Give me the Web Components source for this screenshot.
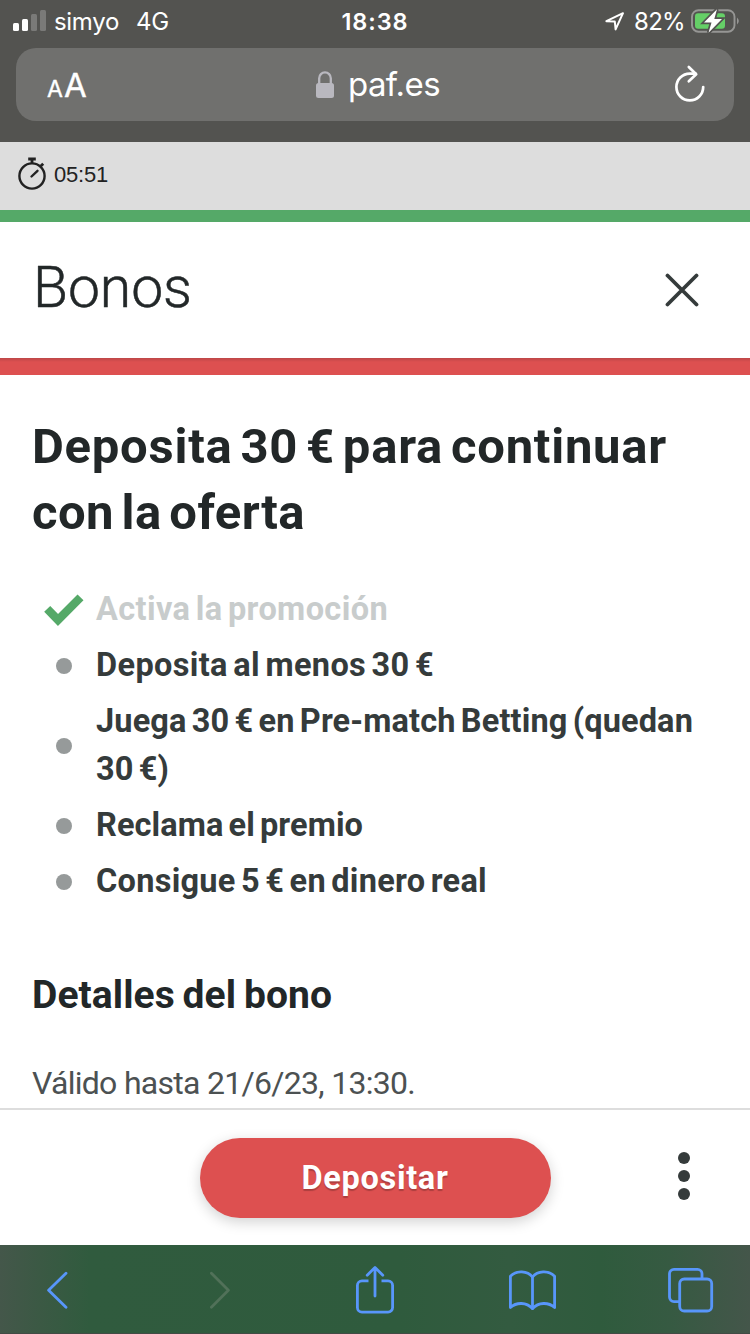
<!DOCTYPE html>
<html lang="es">
<head>
<meta charset="utf-8">
<title>Bonos</title>
<style>
body{
    margin: 0;
    width: 750px;
    height: 1334px;
    overflow: hidden;
    background: #fff;
    font-family: Roboto, "Liberation Sans", sans-serif;
}
</style>
</head>
<body>
<bonus-page>
    <browser-top slot="top" carrier="simyo" network="4G" time="18:38" battery="82%" site="paf.es"></browser-top>
    <session-timer slot="timer">05:51</session-timer>
    <page-header slot="header">Bonos</page-header>
    <bonus-details>
        <text-line slot="title" measure="635">Deposita 30 € para continuar</text-line>
        <text-line slot="title" measure="273">con la oferta</text-line>
        <bonus-step done><text-line measure="292">Activa la promoción</text-line></bonus-step>
        <bonus-step><text-line measure="338">Deposita al menos 30 €</text-line></bonus-step>
        <bonus-step><text-line measure="597">Juega 30 € en Pre-match Betting (quedan</text-line><text-line measure="73">30 €)</text-line></bonus-step>
        <bonus-step><text-line measure="267">Reclama el premio</text-line></bonus-step>
        <bonus-step><text-line measure="391">Consigue 5 € en dinero real</text-line></bonus-step>
        <text-line slot="subtitle" measure="300">Detalles del bono</text-line>
        <text-line slot="note" measure="383">Válido hasta 21/6/23, 13:30.</text-line>
    </bonus-details>
    <action-bar slot="actions"><text-line measure="147">Depositar</text-line></action-bar>
    <browser-tools slot="tools"></browser-tools>
</bonus-page>

<script>
class BonusPage extends HTMLElement{
    constructor(){
        super();
        this.attachShadow({mode: 'open'}).innerHTML = `
        <style>
        :host{
            display: flex;
            flex-direction: column;
            width: 750px;
            height: 1334px;
        }
        main{
            flex: 1;
            min-height: 0;
            overflow: hidden;
        }
        </style>
        <slot name="top"></slot>
        <slot name="timer"></slot>
        <slot name="header"></slot>
        <main><slot></slot></main>
        <slot name="actions"></slot>
        <slot name="tools"></slot>
        `;
    }
}

class BrowserTop extends HTMLElement{
    constructor(){
        super();
        const get = name => this.getAttribute(name);
        this.attachShadow({mode: 'open'}).innerHTML = `
        <style>
        :host{
            display: block;
            height: 142px;
            background: #535350;
            color: #fff;
            font-family: Inter, "Liberation Sans", sans-serif;
        }
        svg{
            display: block;
            flex: none;
        }
        .status{
            display: grid;
            grid-template-columns: 1fr auto 1fr;
            align-items: center;
            height: 40px;
            margin-bottom: 8px;
            font-size: 24px;
            line-height: 40px;
        }
        .status text-line{
            padding-top: 2px;
        }
        .left, .right{
            display: flex;
            align-items: center;
        }
        .left{
            padding-left: 13px;
            gap: 8px;
        }
        .network{
            margin-left: 9px;
        }
        .time{
            font-size: 23.5px;
            font-weight: 600;
        }
        .right{
            justify-content: flex-end;
            padding-right: 11px;
            gap: 6px;
        }
        .location{
            margin-right: 3px;
        }
        .address{
            display: grid;
            grid-template-columns: 1fr auto 1fr;
            align-items: center;
            height: 73px;
            margin: 0 16px;
            border-radius: 20px;
            background: #70706e;
        }
        .size{
            padding-left: 31px;
            padding-top: 5px;
            font-size: 33px;
            line-height: 40px;
            -webkit-text-stroke: .4px #fff;
        }
        .size small{
            font-size: 23px;
            margin-right: 1px;
        }
        .site{
            display: flex;
            align-items: center;
            gap: 14px;
            font-size: 33px;
            line-height: 40px;
            padding-left: 6px;
        }
        .site text-line{
            margin-top: -2px;
        }
        .reload{
            justify-self: end;
            margin: -2px 28px 0 0;
        }
        </style>
        <div class="status">
            <div class="left">
                <svg width="33" height="22" viewBox="0 0 33 22" fill="#fff">
                    <rect y="13" width="6" height="8" rx="1.5"/>
                    <rect x="9" y="9" width="6" height="12" rx="1.5"/>
                    <rect x="18" y="4" width="6" height="17" rx="1.5" opacity=".23"/>
                    <rect x="27" y="0" width="6" height="21" rx="1.5" opacity=".23"/>
                </svg>
                <text-line measure="65">${get('carrier')}</text-line>
                <text-line class="network" measure="33">${get('network')}</text-line>
            </div>
            <text-line class="time" measure="67">${get('time')}</text-line>
            <div class="right">
                <svg class="location" width="20" height="20" viewBox="0 0 20 20" fill="none" stroke="#fff" stroke-width="2" stroke-linejoin="round">
                    <path d="M1.4 10.2 18 2.2 10.6 18.4 9.8 10.5Z"/>
                </svg>
                <text-line measure="51">${get('battery')}</text-line>
                <svg width="48" height="26" viewBox="0 0 48 26">
                    <rect x="1" y="2.2" width="42.5" height="21.5" rx="6.5" fill="none" stroke="#969694" stroke-width="1.9"/>
                    <path d="M46 9.5q3.6 3.4 0 7z" fill="#969694"/>
                    <rect x="4" y="5.2" width="30" height="15.5" rx="3" fill="#65cf67"/>
                    <path d="M26 1.2 13 14.6H20.5L17.5 24.7 31 11H23.3Z" fill="#fff" stroke="#535350" stroke-width="3.4" paint-order="stroke"/>
                </svg>
            </div>
        </div>
        <div class="address">
            <div class="size"><small>A</small>A</div>
            <div class="site">
                <svg width="18" height="28" viewBox="0 0 18 28">
                    <path d="M3.2 13V7.2a5.8 5.8 0 0 1 11.6 0V13" fill="none" stroke="#b9b8bf" stroke-width="2.3"/>
                    <rect y="12" width="18" height="15" rx="2.5" fill="#b9b8bf"/>
                </svg>
                <text-line measure="92">${get('site')}</text-line>
            </div>
            <svg class="reload" width="32" height="38" viewBox="0 0 32 38" fill="none" stroke="#fff" stroke-width="2.7" stroke-linecap="round" stroke-linejoin="round">
                <path d="M29.2 22A13.4 13.4 0 1 1 15.8 8.6H21.5"/>
                <path d="M14.8 2 22.2 9.2 14.8 16.2"/>
            </svg>
        </div>
        `;
    }
}

class SessionTimer extends HTMLElement{
    constructor(){
        super();
        this.attachShadow({mode: 'open'}).innerHTML = `
        <style>
        :host{
            display: flex;
            align-items: center;
            gap: 8px;
            box-sizing: border-box;
            height: 80px;
            padding: 0 18px 4px;
            border-bottom: 12px solid #55a968;
            background: #ddd;
            color: #222;
            font: 22px/30px "Liberation Sans", sans-serif;
        }
        text-line{
            padding-top: 1px;
        }
        </style>
        <svg width="28" height="34" viewBox="0 0 28 34" fill="none" stroke="#222" stroke-width="2.4">
            <circle cx="14" cy="19" r="12.6"/>
            <path d="M10.2 2H17.8M14 2V6.5M22.6 9.3 25.2 6.8" stroke-width="2.8"/>
            <path d="M13.5 19.5 19.5 13.8" stroke-linecap="round"/>
        </svg>
        <text-line measure="54"><slot></slot></text-line>
        `;
    }
}

class PageHeader extends HTMLElement{
    constructor(){
        super();
        this.attachShadow({mode: 'open'}).innerHTML = `
        <style>
        :host{
            display: block;
            color: #222728;
        }
        header{
            display: flex;
            align-items: center;
            justify-content: space-between;
            height: 136px;
            box-sizing: border-box;
            padding: 0 51px 4px 33px;
        }
        h1{
            margin: 0;
            font-size: 57px;
            font-weight: 300;
            line-height: 70px;
            -webkit-text-stroke: .5px #222728;
        }
        svg{
            display: block;
            margin-top: 4px;
        }
        .strip{
            height: 17px;
            background: linear-gradient(#bd4748, #dd5050 4px);
        }
        </style>
        <header>
            <h1><text-line measure="159"><slot></slot></text-line></h1>
            <svg width="34" height="34" viewBox="0 0 34 34" stroke="#353b3b" stroke-width="3.8" stroke-linecap="round">
                <path d="M2.5 2.5 31.5 31.5M31.5 2.5 2.5 31.5"/>
            </svg>
        </header>
        <div class="strip"></div>
        `;
    }
}

class BonusDetails extends HTMLElement{
    constructor(){
        super();
        this.attachShadow({mode: 'open'}).innerHTML = `
        <style>
        :host{
            display: block;
            padding: 39px 32px 0;
            color: #222728;
        }
        h2, h3, p{
            display: flex;
            flex-direction: column;
            align-items: flex-start;
            margin: 0;
        }
        h2{
            font-size: 49px;
            line-height: 66px;
            word-spacing: -5px;
        }
        .steps{
            display: flex;
            flex-direction: column;
            gap: 8px;
            margin: 39px 0 64px;
        }
        h3{
            font-size: 39px;
            line-height: 52px;
            word-spacing: -2px;
        }
        p{
            margin-top: 38px;
            color: #4c5152;
            font-size: 32px;
            line-height: 48px;
        }
        </style>
        <h2><slot name="title"></slot></h2>
        <div class="steps"><slot></slot></div>
        <h3><slot name="subtitle"></slot></h3>
        <p><slot name="note"></slot></p>
        `;
    }
}

class BonusStep extends HTMLElement{
    constructor(){
        super();
        const mark = this.hasAttribute('done')
            ? `<svg width="40" height="32" viewBox="0 0 40 32" fill="none" stroke="#55a968" stroke-width="8.4">
                <path d="M3.2 14.8 14 26 36.5 3.4"/>
            </svg>`
            : '<div class="dot"></div>';
        this.attachShadow({mode: 'open'}).innerHTML = `
        <style>
        :host{
            display: flex;
            align-items: center;
            color: #353b3b;
            font-size: 32.5px;
            font-weight: 700;
            line-height: 48px;
            word-spacing: -3px;
        }
        :host([done]){
            color: #c8cccc;
        }
        .mark{
            display: flex;
            justify-content: center;
            width: 64px;
            padding-top: 2px;
        }
        .dot{
            width: 16px;
            height: 16px;
            border-radius: 50%;
            background: #969a9a;
        }
        .text{
            display: flex;
            flex-direction: column;
            align-items: flex-start;
        }
        </style>
        <div class="mark">${mark}</div>
        <div class="text"><slot></slot></div>
        `;
    }
}

class ActionBar extends HTMLElement{
    constructor(){
        super();
        this.attachShadow({mode: 'open'}).innerHTML = `
        <style>
        :host{
            display: grid;
            grid-template-columns: 1fr 351px 1fr;
            align-items: center;
            box-sizing: border-box;
            height: 137px;
            border-top: 2px solid #ddd;
            background: #fff;
        }
        button{
            grid-column: 2;
            height: 80px;
            margin-top: 1px;
            padding: 0 0 1px;
            border: 0;
            border-radius: 40px;
            background: #dd5050;
            box-shadow: 0 4px 14px rgba(0,0,0,.18);
            color: #fff;
            font: 700 32.5px/48px Roboto, sans-serif;
            text-shadow: 0 2px 1px rgba(0,0,0,.22);
        }
        svg{
            display: block;
            justify-self: end;
            margin: -3px 60px 0 0;
        }
        </style>
        <button><slot></slot></button>
        <svg width="12" height="48" viewBox="0 0 12 48" fill="#353b3b">
            <circle cx="6" cy="6" r="6"/>
            <circle cx="6" cy="24" r="6"/>
            <circle cx="6" cy="42" r="6"/>
        </svg>
        `;
    }
}

class BrowserTools extends HTMLElement{
    constructor(){
        super();
        this.attachShadow({mode: 'open'}).innerHTML = `
        <style>
        :host{
            display: grid;
            grid-template-columns: 163px 147px 152px 160px auto;
            align-items: center;
            box-sizing: border-box;
            height: 89px;
            padding: 2px 36px 0 46px;
            border-bottom: 1px solid #424b45;
            background: linear-gradient(90deg, #44574a, #3b5944 40px, #305b3e 90px, #2f5b3d 400px, #335b40 510px, #2f5b3d 600px, #365a42 670px, #44564a);
        }
        svg{
            display: block;
            fill: none;
            stroke: #5896fa;
            stroke-width: 2.8;
            stroke-linecap: round;
            stroke-linejoin: round;
        }
        .next{
            stroke: #517159;
        }
        </style>
        <svg width="22" height="38" viewBox="0 0 22 38"><path d="M20 2.3 2.6 19.3 20 36.3"/></svg>
        <svg class="next" width="22" height="38" viewBox="0 0 22 38"><path d="M2.4 2.3 19.4 19.3 2.4 36.3"/></svg>
        <svg width="38" height="50" viewBox="0 0 38 50">
            <path d="M12.5 15.8H6a4.6 4.6 0 0 0-4.6 4.6V42.6A4.6 4.6 0 0 0 6 47.2H32a4.6 4.6 0 0 0 4.6-4.6V20.4a4.6 4.6 0 0 0-4.6-4.6H25.5" stroke-linecap="butt"/>
            <path d="M19 31V2.6M11.2 10.2 19 2.4 26.8 10.2"/>
        </svg>
        <svg width="49" height="42" viewBox="0 0 49 42">
            <path d="M24.5 8C19.5 1.6 8.5 .8 2.4 7.2V38.5C8.5 33 18.5 33 24.5 39.6 30.5 33 40.5 33 46.6 38.5V7.2C40.5 .8 29.5 1.6 24.5 8Z"/>
            <path d="M24.5 8V39.6"/>
        </svg>
        <svg width="46" height="46" viewBox="0 0 46 46">
            <path d="M12 34.6H6a4.5 4.5 0 0 1-4.5-4.5V6.8A4.5 4.5 0 0 1 6 2.3H29.5A4.5 4.5 0 0 1 34 6.8V12" stroke-linecap="butt"/>
            <rect x="11.7" y="12" width="32" height="32" rx="4.6"/>
        </svg>
        `;
    }
}

// One line of text, tracked so that it fills its measure (px).
class TextLine extends HTMLElement{
    constructor(){
        super();
        this.attachShadow({mode: 'open'}).innerHTML = `
        <style>
        :host{
            display: inline-block;
            white-space: nowrap;
        }
        </style>
        <slot></slot>
        `;
    }

    connectedCallback(){
        const slot = this.querySelector('slot');
        const nodes = slot ? slot.assignedNodes() : [this];
        const length = nodes.map(node => node.textContent).join('').trim().length;
        const width = this.getBoundingClientRect().width;
        this.style.letterSpacing = (this.getAttribute('measure') - width) / length + 'px';
    }
}

customElements.define('bonus-page', BonusPage);
customElements.define('browser-top', BrowserTop);
customElements.define('session-timer', SessionTimer);
customElements.define('page-header', PageHeader);
customElements.define('bonus-details', BonusDetails);
customElements.define('bonus-step', BonusStep);
customElements.define('action-bar', ActionBar);
customElements.define('browser-tools', BrowserTools);
customElements.define('text-line', TextLine);
</script>
</body>
</html>
